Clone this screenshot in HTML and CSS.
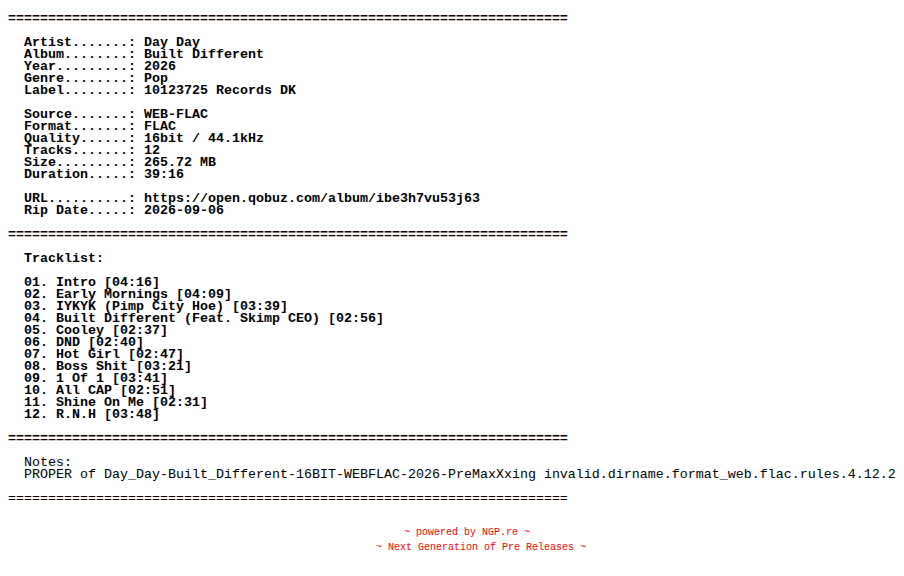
FILE: index.html
```html
<!DOCTYPE html>
<html>
<head>
<meta charset="utf-8">
<link rel="stylesheet" href="styles.css">
</head>
<body>
<pre class="nfo">======================================================================

  Artist.......: Day Day
  Album........: Built Different
  Year.........: 2026
  Genre........: Pop
  Label........: 10123725 Records DK

  Source.......: WEB-FLAC
  Format.......: FLAC
  Quality......: 16bit / 44.1kHz
  Tracks.......: 12
  Size.........: 265.72 MB
  Duration.....: 39:16

  URL..........: https://open.qobuz.com/album/ibe3h7vu53j63
  Rip Date.....: 2026-09-06

======================================================================

  Tracklist:

  01. Intro [04:16]
  02. Early Mornings [04:09]
  03. IYKYK (Pimp City Hoe) [03:39]
  04. Built Different (Feat. Skimp CEO) [02:56]
  05. Cooley [02:37]
  06. DND [02:40]
  07. Hot Girl [02:47]
  08. Boss Shit [03:21]
  09. 1 Of 1 [03:41]
  10. All CAP [02:51]
  11. Shine On Me [02:31]
  12. R.N.H [03:48]

======================================================================
</pre>
<pre class="nfo notes">

  Notes:
  PROPER of Day_Day-Built_Different-16BIT-WEBFLAC-2026-PreMaxXxing invalid.dirname.format_web.flac.rules.4.12.2

======================================================================
</pre>
<div class="footer">
  <div class="line first">~ powered by NGP.re ~</div>
  <div class="line">~ Next Generation of Pre Releases ~</div>
</div>
</body>
</html>
```
FILE: styles.css
```css
html, body {
  background: #ffffff;
}
body {
  margin: 0;
  padding: 13px 8px 0 8px;
  color: #000000;
}
.nfo {
  margin: 0;
  font-family: "Liberation Mono", "DejaVu Sans Mono", monospace;
  font-weight: bold;
  font-size: 13.333px;
  line-height: 12px;
  white-space: pre;
}
.notes {
  font-weight: normal;
}
.footer {
  display: flex;
  flex-direction: column;
  align-items: center;
  padding-left: 58px;
  margin-top: 20px;
  font-family: "Liberation Mono", "DejaVu Sans Mono", monospace;
  font-size: 10px;
  line-height: 15px;
  color: #ff0000;
}
.footer .first {
  padding-right: 28px;
}
```
